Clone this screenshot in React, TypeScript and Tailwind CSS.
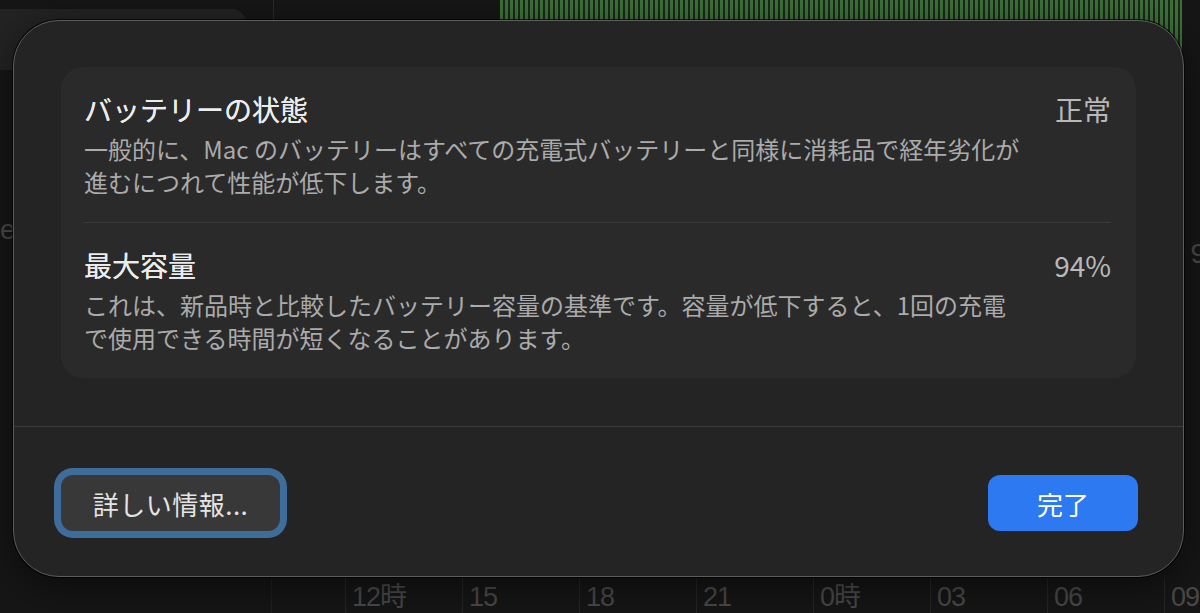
import React from "react";

const ticks = ["12時", "15", "18", "21", "0時", "03", "06", "09"];

function Section({
  title,
  value,
  lines,
}: {
  title: string;
  value: string;
  lines: string[];
}) {
  return (
    <div className="py-[24px]">
      <div className="flex items-start justify-between">
        <div className="text-[28px] leading-[36px] font-normal text-[#ececec] whitespace-nowrap [text-shadow:0_0_0.6px_#ececec]">
          {title}
        </div>
        <div className="text-[28px] leading-[36px] text-[#b9b9b9] whitespace-nowrap">
          {value}
        </div>
      </div>
      <div className="mt-[5px] text-[24px] leading-[33px] text-[#ababab] whitespace-nowrap">
        {lines.map((l, i) => (
          <div key={i}>{l}</div>
        ))}
      </div>
    </div>
  );
}

export default function App() {
  return (
    <div className="relative w-[1200px] h-[613px] overflow-hidden bg-[#161616] font-['Noto_Sans_CJK_JP','Noto_Sans',sans-serif]">
      {/* background app */}
      <div className="absolute inset-0 flex flex-col">
        <div className="flex h-[70px]">
          <div className="shrink-0 mt-[9px] w-[246px] rounded-tr-[14px] bg-[#232323]" />
          <div className="shrink-0 ml-[27px] w-px h-[24px] bg-[#2a2a2a]" />
          <div className="shrink-0 ml-[226px] w-[682px] bg-[repeating-linear-gradient(90deg,#3e7239_0px,#3e7239_3px,#1c281b_3px,#1c281b_5px)]" />
        </div>
        <div className="flex-1 flex justify-between items-start pt-[144px]">
          <div className="text-[28px] leading-[32px] text-[#4a4a4a] font-['Liberation_Sans',sans-serif]">e</div>
          <div className="mt-[24px] mr-[-6px] text-[28px] leading-[32px] text-[#4a4a4a] font-['Liberation_Sans',sans-serif]">9</div>
        </div>
        <div className="flex h-[35px]">
          <div className="shrink-0 w-[272px] border-r border-[#202020]" />
          <div className="shrink-0 w-[73px]" />
          {ticks.map((t) => (
            <div
              key={t}
              className="w-[117px] shrink-0 border-l border-[#262626] pl-[6px] pt-[2px] text-[27px] leading-[34px] text-[#4a4a4a] font-['Liberation_Sans','Noto_Sans_CJK_JP',sans-serif] tracking-[-1px]"
            >
              {t}
            </div>
          ))}
        </div>
      </div>

      {/* dialog */}
      <div className="absolute left-[13px] top-[20px] w-[1171px] h-[557px] rounded-[46px] border border-[#5c5c5c] bg-[#242424] shadow-[0_0_0_1px_rgba(0,0,0,0.7),0_10px_40px_rgba(0,0,0,0.5)] flex flex-col">
        <div className="px-[47px] pt-[46px] pb-[48px]">
          <div className="rounded-[22px] bg-[#2a2a2a] px-[23px] pr-[25px]">
            <Section
              title="バッテリーの状態"
              value="正常"
              lines={[
                "一般的に、Mac のバッテリーはすべての充電式バッテリーと同様に消耗品で経年劣化が",
                "進むにつれて性能が低下します。",
              ]}
            />
            <div className="h-px bg-[#3a3a3a]" />
            <Section
              title="最大容量"
              value="94%"
              lines={[
                "これは、新品時と比較したバッテリー容量の基準です。容量が低下すると、1回の充電",
                "で使用できる時間が短くなることがあります。",
              ]}
            />
          </div>
        </div>
        <div className="h-px bg-[#3b3b3b]" />
        <div className="flex-1 flex items-center justify-between pl-[47px] pr-[45px] pt-[3px]">
          <button className="w-[219px] h-[56px] rounded-[12px] bg-[#383838] ring-[7px] ring-[#3e6d9b] text-[26px] tracking-[0.5px] text-[#e4e4e4] flex items-center justify-center">
            詳しい情報...
          </button>
          <button className="w-[150px] h-[56px] rounded-[12px] bg-[#2d79f2] text-[26px] text-white flex items-center justify-center">
            完了
          </button>
        </div>
      </div>
    </div>
  );
}
